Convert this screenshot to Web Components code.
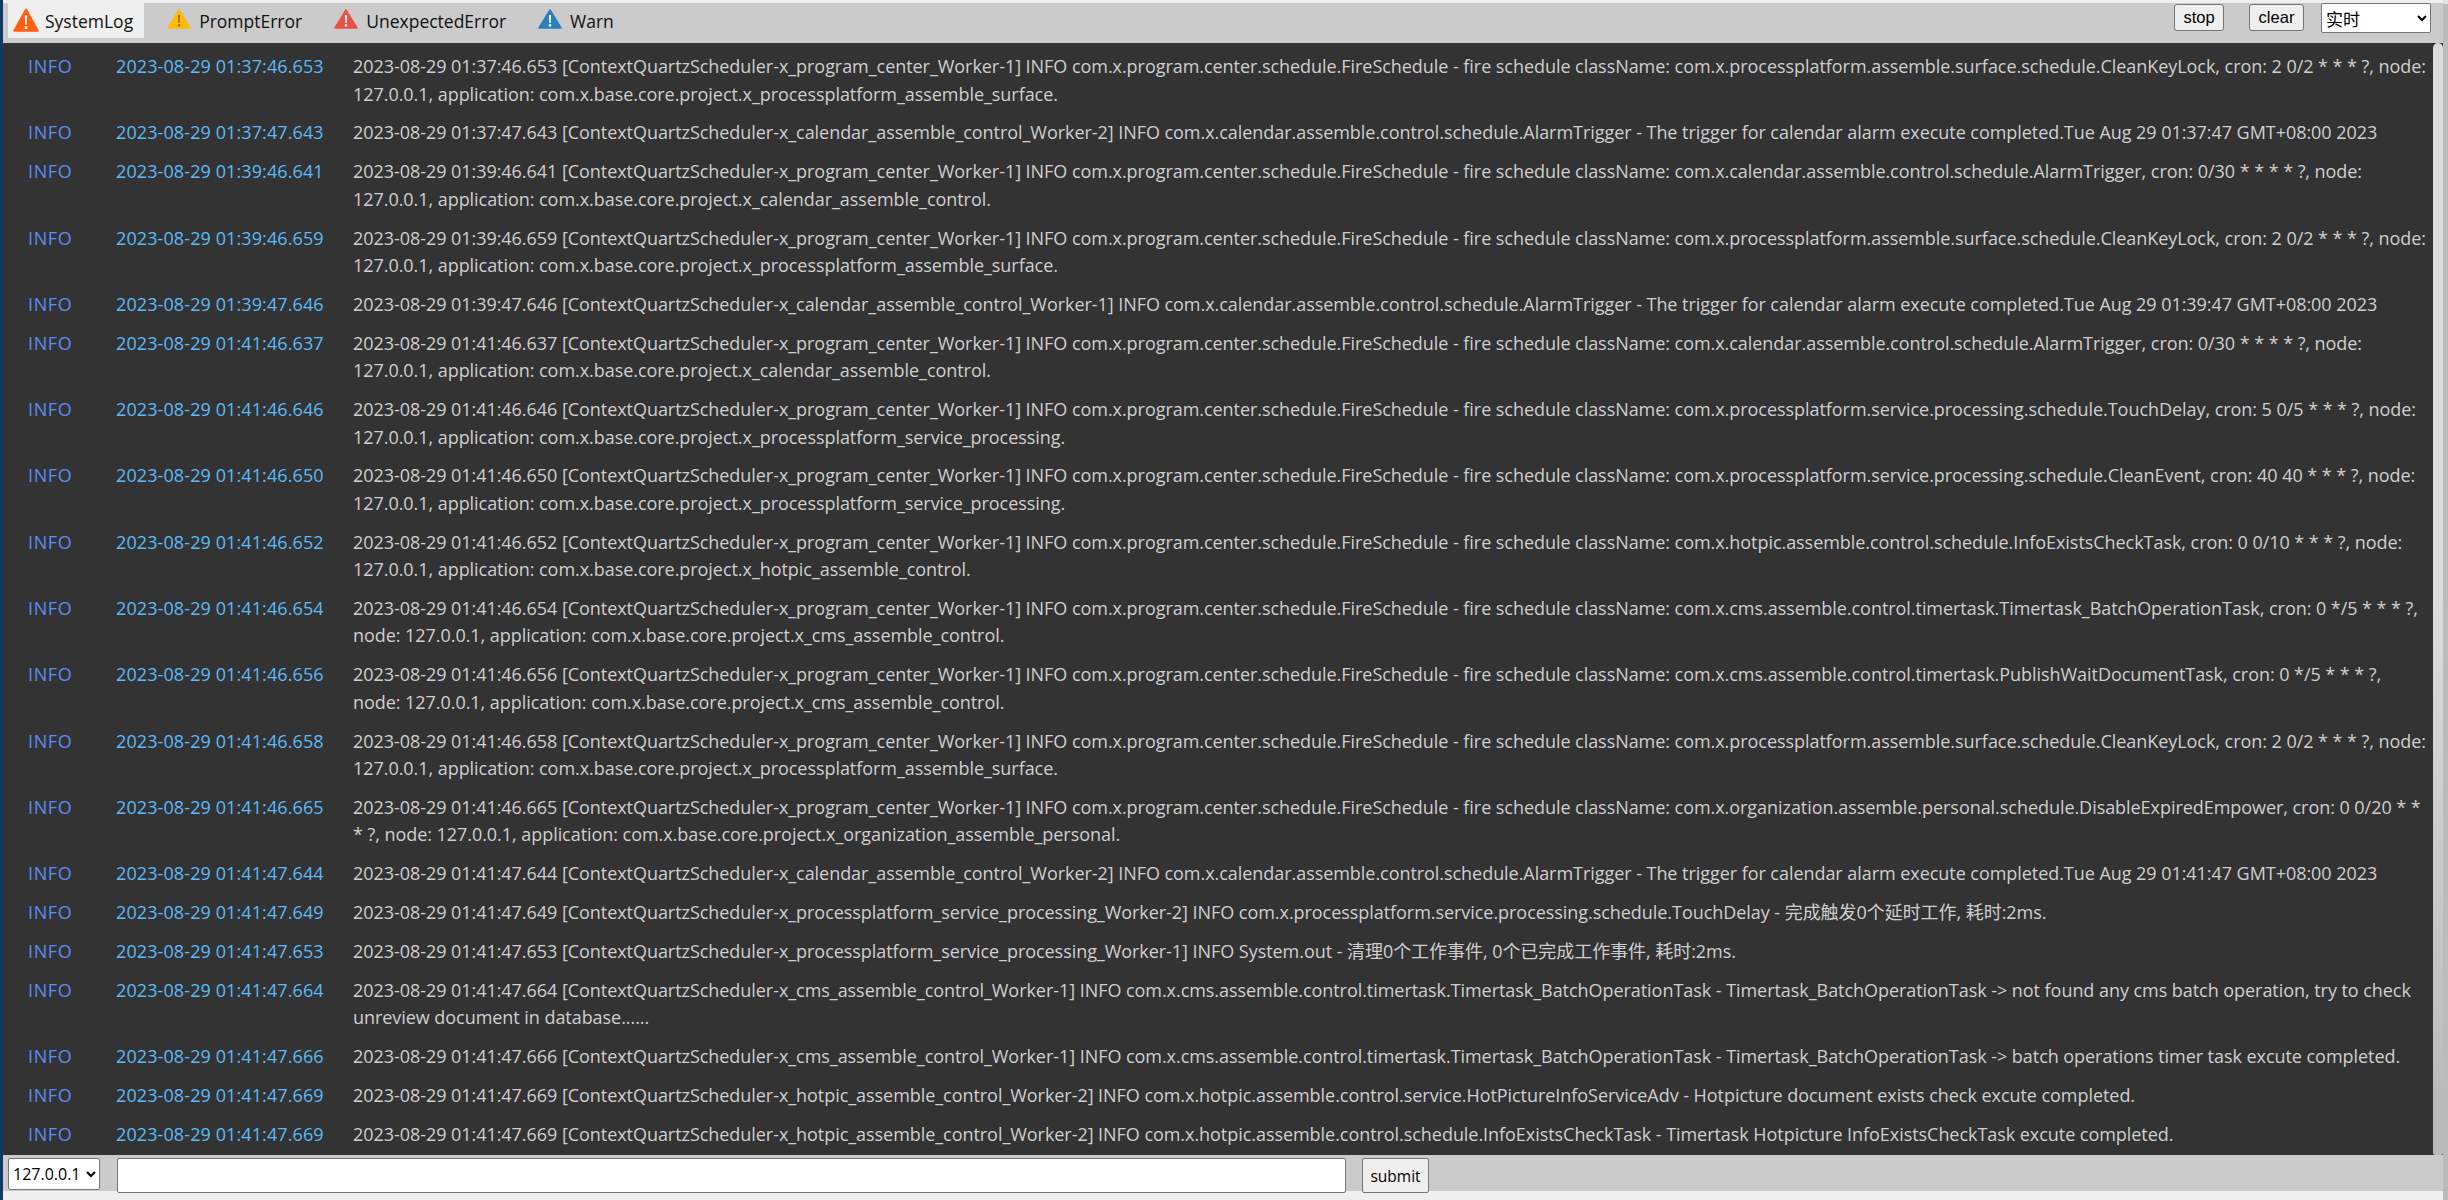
<!DOCTYPE html>
<html>
<head>
<meta charset="utf-8">
<title>Log</title>
<style>
  html, body { margin: 0; height: 100%; overflow: hidden; background: #efefef; }
  body { font-family: "Open Sans", "Noto Sans CJK SC", sans-serif; }
</style>
</head>
<body>
<log-console>
  <log-tab slot="tabs" kind="orange" active>SystemLog</log-tab>
  <log-tab slot="tabs" kind="yellow">PromptError</log-tab>
  <log-tab slot="tabs" kind="red">UnexpectedError</log-tab>
  <log-tab slot="tabs" kind="blue">Warn</log-tab>
</log-console>

<script>
const ROWS = [
  ["2023-08-29 01:37:46.653", "[ContextQuartzScheduler-x_program_center_Worker-1] INFO com.x.program.center.schedule.FireSchedule - fire schedule className: com.x.processplatform.assemble.surface.schedule.CleanKeyLock, cron: 2 0/2 * * * ?, node: 127.0.0.1, application: com.x.base.core.project.x_processplatform_assemble_surface."],
  ["2023-08-29 01:37:47.643", "[ContextQuartzScheduler-x_calendar_assemble_control_Worker-2] INFO com.x.calendar.assemble.control.schedule.AlarmTrigger - The trigger for calendar alarm execute completed.Tue Aug 29 01:37:47 GMT+08:00 2023"],
  ["2023-08-29 01:39:46.641", "[ContextQuartzScheduler-x_program_center_Worker-1] INFO com.x.program.center.schedule.FireSchedule - fire schedule className: com.x.calendar.assemble.control.schedule.AlarmTrigger, cron: 0/30 * * * * ?, node: 127.0.0.1, application: com.x.base.core.project.x_calendar_assemble_control."],
  ["2023-08-29 01:39:46.659", "[ContextQuartzScheduler-x_program_center_Worker-1] INFO com.x.program.center.schedule.FireSchedule - fire schedule className: com.x.processplatform.assemble.surface.schedule.CleanKeyLock, cron: 2 0/2 * * * ?, node: 127.0.0.1, application: com.x.base.core.project.x_processplatform_assemble_surface."],
  ["2023-08-29 01:39:47.646", "[ContextQuartzScheduler-x_calendar_assemble_control_Worker-1] INFO com.x.calendar.assemble.control.schedule.AlarmTrigger - The trigger for calendar alarm execute completed.Tue Aug 29 01:39:47 GMT+08:00 2023"],
  ["2023-08-29 01:41:46.637", "[ContextQuartzScheduler-x_program_center_Worker-1] INFO com.x.program.center.schedule.FireSchedule - fire schedule className: com.x.calendar.assemble.control.schedule.AlarmTrigger, cron: 0/30 * * * * ?, node: 127.0.0.1, application: com.x.base.core.project.x_calendar_assemble_control."],
  ["2023-08-29 01:41:46.646", "[ContextQuartzScheduler-x_program_center_Worker-1] INFO com.x.program.center.schedule.FireSchedule - fire schedule className: com.x.processplatform.service.processing.schedule.TouchDelay, cron: 5 0/5 * * * ?, node: 127.0.0.1, application: com.x.base.core.project.x_processplatform_service_processing."],
  ["2023-08-29 01:41:46.650", "[ContextQuartzScheduler-x_program_center_Worker-1] INFO com.x.program.center.schedule.FireSchedule - fire schedule className: com.x.processplatform.service.processing.schedule.CleanEvent, cron: 40 40 * * * ?, node: 127.0.0.1, application: com.x.base.core.project.x_processplatform_service_processing."],
  ["2023-08-29 01:41:46.652", "[ContextQuartzScheduler-x_program_center_Worker-1] INFO com.x.program.center.schedule.FireSchedule - fire schedule className: com.x.hotpic.assemble.control.schedule.InfoExistsCheckTask, cron: 0 0/10 * * * ?, node: 127.0.0.1, application: com.x.base.core.project.x_hotpic_assemble_control."],
  ["2023-08-29 01:41:46.654", "[ContextQuartzScheduler-x_program_center_Worker-1] INFO com.x.program.center.schedule.FireSchedule - fire schedule className: com.x.cms.assemble.control.timertask.Timertask_BatchOperationTask, cron: 0 */5 * * * ?, node: 127.0.0.1, application: com.x.base.core.project.x_cms_assemble_control."],
  ["2023-08-29 01:41:46.656", "[ContextQuartzScheduler-x_program_center_Worker-1] INFO com.x.program.center.schedule.FireSchedule - fire schedule className: com.x.cms.assemble.control.timertask.PublishWaitDocumentTask, cron: 0 */5 * * * ?, node: 127.0.0.1, application: com.x.base.core.project.x_cms_assemble_control."],
  ["2023-08-29 01:41:46.658", "[ContextQuartzScheduler-x_program_center_Worker-1] INFO com.x.program.center.schedule.FireSchedule - fire schedule className: com.x.processplatform.assemble.surface.schedule.CleanKeyLock, cron: 2 0/2 * * * ?, node: 127.0.0.1, application: com.x.base.core.project.x_processplatform_assemble_surface."],
  ["2023-08-29 01:41:46.665", "[ContextQuartzScheduler-x_program_center_Worker-1] INFO com.x.program.center.schedule.FireSchedule - fire schedule className: com.x.organization.assemble.personal.schedule.DisableExpiredEmpower, cron: 0 0/20 * * * ?, node: 127.0.0.1, application: com.x.base.core.project.x_organization_assemble_personal."],
  ["2023-08-29 01:41:47.644", "[ContextQuartzScheduler-x_calendar_assemble_control_Worker-2] INFO com.x.calendar.assemble.control.schedule.AlarmTrigger - The trigger for calendar alarm execute completed.Tue Aug 29 01:41:47 GMT+08:00 2023"],
  ["2023-08-29 01:41:47.649", "[ContextQuartzScheduler-x_processplatform_service_processing_Worker-2] INFO com.x.processplatform.service.processing.schedule.TouchDelay - 完成触发0个延时工作, 耗时:2ms."],
  ["2023-08-29 01:41:47.653", "[ContextQuartzScheduler-x_processplatform_service_processing_Worker-1] INFO System.out - 清理0个工作事件, 0个已完成工作事件, 耗时:2ms."],
  ["2023-08-29 01:41:47.664", "[ContextQuartzScheduler-x_cms_assemble_control_Worker-1] INFO com.x.cms.assemble.control.timertask.Timertask_BatchOperationTask - Timertask_BatchOperationTask -> not found any cms batch operation, try to check unreview document in database......"],
  ["2023-08-29 01:41:47.666", "[ContextQuartzScheduler-x_cms_assemble_control_Worker-1] INFO com.x.cms.assemble.control.timertask.Timertask_BatchOperationTask - Timertask_BatchOperationTask -> batch operations timer task excute completed."],
  ["2023-08-29 01:41:47.669", "[ContextQuartzScheduler-x_hotpic_assemble_control_Worker-2] INFO com.x.hotpic.assemble.control.service.HotPictureInfoServiceAdv - Hotpicture document exists check excute completed."],
  ["2023-08-29 01:41:47.669", "[ContextQuartzScheduler-x_hotpic_assemble_control_Worker-2] INFO com.x.hotpic.assemble.control.schedule.InfoExistsCheckTask - Timertask Hotpicture InfoExistsCheckTask excute completed."]
];

const TAB_COLORS = { orange: "#ff5f0f", yellow: "#ffbb0a", red: "#ea5145", blue: "#2b7fbd" };

class LogTab extends HTMLElement {
  constructor() {
    super();
    this.attachShadow({ mode: "open" });
    const kind = this.getAttribute("kind");
    const color = TAB_COLORS[kind];
    const mark = kind == "yellow" ? "#a5700a" : "#fff";
    this.shadowRoot.innerHTML = `
    <style>
      :host {
        display: flex;
        align-items: center;
        gap: 8px;
        height: 35px;
        box-sizing: border-box;
        padding: 0 8px;
        margin-right: 16px;
        font-size: 17.5px;
        color: #111;
      }
      :host([active]) {
        gap: 6px;
        padding: 0 11px 0 5px;
        margin-right: 15px;
        background: #efefef;
      }
      svg { width: 24px; height: 20px; flex-shrink: 0; margin-top: -4px; }
      :host([active]) svg { width: 26px; height: 24px; margin-top: -1px; }
    </style>
    <svg viewBox="0 0 24 20" preserveAspectRatio="none">
      <path d="M12 1 L23 19 L1 19 Z" fill="${color}" stroke="${color}" stroke-width="1.5" stroke-linejoin="round"/>
      <path d="M10.9 6 h2.2 l-.4 8 h-1.4 Z M10.8 15.2 h2.4 v2.4 h-2.4 Z" fill="${mark}"/>
    </svg>
    <slot></slot>
    `;
  }
}
customElements.define("log-tab", LogTab);

class LogRow extends HTMLElement {
  constructor() {
    super();
    this.attachShadow({ mode: "open" });
    this.shadowRoot.innerHTML = `
    <style>
      :host {
        display: flex;
        padding: 5.66px 5px 5.66px 0;
        line-height: 27.5px;
        font-size: 18px;
      }
      .level { width: 88px; padding-left: 25px; flex-shrink: 0; color: #5b8cf5; letter-spacing: .6px; }
      .time { width: 237px; flex-shrink: 0; color: #5cbaf8; letter-spacing: .1px; }
      .text { flex: 1; color: #cfcfcf; min-width: 0; letter-spacing: -.05px; }
    </style>
    <div class="level">INFO</div>
    <div class="time"><slot name="time"></slot></div>
    <div class="text"><slot name="text"></slot></div>
    `;
  }
}
customElements.define("log-row", LogRow);

class LogConsole extends HTMLElement {
  constructor() {
    super();
    this.attachShadow({ mode: "open" });
    this.shadowRoot.innerHTML = `
    <style>
      :host {
        display: flex;
        height: 1200px;
        box-sizing: border-box;
        border-left: 3px solid #103a66;
      }
      .main {
        flex: 1;
        min-width: 0;
        display: flex;
        flex-direction: column;
        border-top: 3px solid #efefef;
        background: #cbcbcb;
      }
      .outerbar { width: 5px; flex-shrink: 0; background: #e4e4e4; display: flex; padding-top: 4px; box-sizing: border-box; }
      .outerbar div { flex: 1; background: #bbb; }
      .top {
        display: flex;
        align-items: flex-start;
        height: 40px;
        padding: 0 12px 0 5px;
        flex-shrink: 0;
      }
      .tabs { display: flex; flex: 1; }
      .top button {
        font: 16.5px "Liberation Sans", sans-serif;
        height: 27px;
        padding: 0;
        margin-top: 1px;
        background: #efefef;
        border: 1px solid #767676;
        border-radius: 3px;
        color: #000;
      }
      .stop { width: 50px; margin-right: 25px; }
      .clear { width: 55px; margin-right: 17px; }
      select { background: #fff; border: 1px solid #767676; border-radius: 2px; color: #000; }
      .top select { width: 110px; height: 30px; font: 17px "Noto Sans CJK SC", sans-serif; padding: 0; }
      .middle { flex: 1; min-height: 0; display: flex; }
      .list {
        flex: 1;
        min-width: 0;
        background: #333;
        overflow: hidden;
        padding-top: 4.5px;
      }
      .thumbtrack { width: 10px; flex-shrink: 0; background: #333; }
      .thumb { height: 100%; background: linear-gradient(#dcdcdc 50%, #bbb 95%); border-radius: 5px 5px 2px 2px; }
      .bottom {
        display: flex;
        align-items: flex-start;
        flex-shrink: 0;
        height: 36px;
        padding: 3px 0 0 5px;
        box-sizing: border-box;
      }
      .bottom select { width: 92px; height: 32px; font: 16px "Open Sans", sans-serif; }
      .bottom input {
        width: 1229px;
        height: 35px;
        box-sizing: border-box;
        margin-left: 17px;
        background: #fff;
        border: 1px solid #767676;
        border-radius: 2px;
        position: relative;
      }
      .bottom button {
        width: 67px;
        height: 35px;
        margin-left: 16px;
        padding: 0;
        font: 15.5px "Open Sans", sans-serif;
        background: #efefef;
        border: 1px solid #767676;
        border-radius: 2px;
        color: #000;
        position: relative;
      }
      .foot { height: 9px; background: #efefef; flex-shrink: 0; }
    </style>
    <div class="main">
      <div class="top">
        <div class="tabs"><slot name="tabs"></slot></div>
        <button class="stop">stop</button>
        <button class="clear">clear</button>
        <select><option>实时</option></select>
      </div>
      <div class="middle">
        <div class="list"></div>
        <div class="thumbtrack"><div class="thumb"></div></div>
      </div>
      <div class="bottom">
        <select><option>127.0.0.1</option></select>
        <input type="text">
        <button>submit</button>
      </div>
      <div class="foot"></div>
    </div>
    <div class="outerbar"><div></div></div>
    `;
    const list = this.shadowRoot.querySelector(".list");
    for (const [time, text] of ROWS) {
      const row = document.createElement("log-row");
      const t = document.createElement("span");
      t.slot = "time";
      t.textContent = time;
      const m = document.createElement("span");
      m.slot = "text";
      m.textContent = time + " " + text;
      row.append(t, m);
      list.append(row);
    }
  }
}
customElements.define("log-console", LogConsole);
</script>
</body>
</html>
